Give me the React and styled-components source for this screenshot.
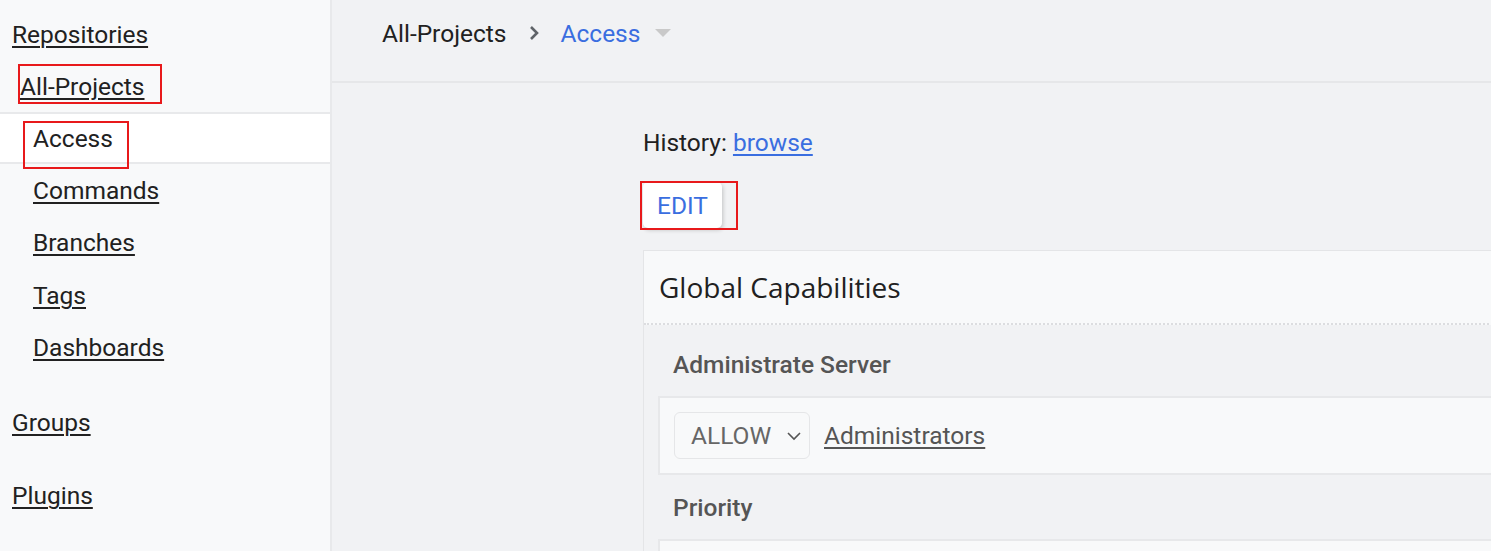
import React from 'react'
import styled, { createGlobalStyle } from 'styled-components'

const Global = createGlobalStyle`
  html, body {
    margin: 0;
    padding: 0;
    overflow: hidden;
    background: #f1f2f4;
    font-family: Roboto, "Liberation Sans", sans-serif;
    color: #212121;
  }
`

const sidebarItems = ['Access', 'Commands', 'Branches', 'Tags', 'Dashboards']

function App() {
  return (
    <Page>
      <Global />
      <Sidebar>
        <TopLink href='#'>Repositories</TopLink>
        <ProjectLink href='#'>
          <Mark $t={-8} $l={-2} $r={-17} $b={-3}>All-Projects</Mark>
        </ProjectLink>
        <SubList>
          {sidebarItems.map((item) => (
            <SubItem key={item} $active={item === 'Access'}>
              <a href='#'>
                {item === 'Access' ? (
                  <Mark $t={-3} $l={-10} $r={-16} $b={-16}>{item}</Mark>
                ) : (
                  item
                )}
              </a>
            </SubItem>
          ))}
        </SubList>
        <SectionLink href='#' $gap={23}>Groups</SectionLink>
        <SectionLink href='#' $gap={21}>Plugins</SectionLink>
      </Sidebar>

      <Main>
        <Header>
          <Crumb>All-Projects</Crumb>
          <Chevron viewBox='0 0 12 16'>
            <path d='M3 2 L9 8 L3 14' fill='none' stroke='#5f6368' strokeWidth='2.6' />
          </Chevron>
          <CrumbActive>Access</CrumbActive>
          <Caret />
        </Header>

        <Content>
          <History>
            History: <a href='#'>browse</a>
          </History>
          <EditMark $t={-1} $l={-3} $r={-16} $b={-2}>
            <EditButton>EDIT</EditButton>
          </EditMark>

          <Card>
            <CardHeader>Global Capabilities</CardHeader>
            <CardBody>
              <Permission>Administrate Server</Permission>
              <Rule>
                <Select>
                  ALLOW
                  <svg width='16' height='10' viewBox='0 0 16 10'>
                    <path d='M2 2 L8 8 L14 2' fill='none' stroke='#555' strokeWidth='1.6' />
                  </svg>
                </Select>
                <GroupLink href='#'>Administrators</GroupLink>
              </Rule>
              <Permission>Priority</Permission>
              <Rule />
            </CardBody>
          </Card>
        </Content>
      </Main>
    </Page>
  )
}

export default App

const Page = styled.div`
  display: flex;
  width: 1491px;
  height: 551px;
  overflow: hidden;
`

const Sidebar = styled.nav`
  width: 330px;
  flex-shrink: 0;
  background: #f8f9fa;
  border-right: 2px solid #e8e9eb;
  display: flex;
  flex-direction: column;
  padding-top: 8px;
  font-size: 24.5px;

  a {
    color: #212121;
    text-decoration: underline;
    text-underline-offset: 3px;
    text-decoration-thickness: 2px;
  }
`

const TopLink = styled.a`
  height: 52px;
  display: flex;
  align-items: center;
  padding-left: 12px;
`

const ProjectLink = styled(TopLink)`
  padding-left: 20px;
`

const SectionLink = styled(TopLink)`
  margin-top: ${(p) => p.$gap}px;
`

const SubList = styled.ul`
  list-style: none;
  margin: 0;
  padding: 0;
`

const SubItem = styled.li`
  height: 52.4px;
  box-sizing: border-box;
  display: flex;
  align-items: center;
  padding-left: 33px;
  background: ${(p) => (p.$active ? '#fff' : 'transparent')};
  border-top: 2px solid ${(p) => (p.$active ? '#e8e9eb' : 'transparent')};
  border-bottom: 2px solid ${(p) => (p.$active ? '#e8e9eb' : 'transparent')};
`

const Mark = styled.span`
  position: relative;
  display: inline-block;

  &::after {
    content: '';
    position: absolute;
    top: ${(p) => p.$t}px;
    left: ${(p) => p.$l}px;
    right: ${(p) => p.$r}px;
    bottom: ${(p) => p.$b}px;
    border: 2px solid #e8191b;
    pointer-events: none;
  }
`

const EditMark = styled(Mark)`
  margin-top: 25px;
`

const Main = styled.main`
  flex: 1;
  display: flex;
  flex-direction: column;
  min-width: 0;
`

const Header = styled.header`
  flex-shrink: 0;
  border-bottom: 2px solid #e6e7e9;
  display: flex;
  align-items: center;
  padding-left: 50px;
  padding-bottom: 15px;
  box-sizing: border-box;
  height: 83px;
  font-size: 24.5px;
`

const Crumb = styled.span`
  color: #212121;
`

const Chevron = styled.svg`
  width: 12px;
  height: 16px;
  margin: 0 21px 0 21px;
`

const CrumbActive = styled.span`
  color: #3a6ee0;
`

const Caret = styled.span`
  width: 0;
  height: 0;
  margin-left: 15px;
  border-left: 8px solid transparent;
  border-right: 8px solid transparent;
  border-top: 8px solid #c9c9c9;
`

const Content = styled.div`
  padding: 45px 0 0 311px;
  display: flex;
  flex-direction: column;
  align-items: flex-start;
`

const History = styled.div`
  font-size: 24.5px;
  line-height: 29px;
  color: #212121;

  a {
    color: #3a6ee0;
    text-underline-offset: 3px;
  }
`

const EditButton = styled.button`
  display: block;
  font-family: Roboto, "Liberation Sans", sans-serif;
  font-size: 24.5px;
  color: #3a6ee0;
  background: #fff;
  border: none;
  border-radius: 5px;
  padding: 0 14px;
  height: 46px;
  box-shadow: 1px 2px 4px rgba(0, 0, 0, 0.2);
`

const Card = styled.section`
  margin-top: 22px;
  width: 1200px;
  border: 1px solid #e4e5e7;
  border-right: none;
`

const CardHeader = styled.h3`
  margin: 0;
  height: 72px;
  display: flex;
  align-items: center;
  padding-left: 15px;
  background: #f8f9fa;
  border-bottom: 2px dotted #dcdde0;
  font-family: "Open Sans", sans-serif;
  font-weight: 400;
  font-size: 28px;
  color: #212121;
`

const CardBody = styled.div`
  padding: 7px 0 0 14px;
`

const Permission = styled.h4`
  margin: 0;
  height: 64px;
  display: flex;
  align-items: center;
  padding-left: 15px;
  font-size: 24.5px;
  font-weight: 500;
  color: #555;
`

const Rule = styled.div`
  height: 79px;
  box-sizing: border-box;
  border: 2px solid #e7e8ea;
  border-right: none;
  background: #f8f9fa;
  display: flex;
  align-items: center;
  padding-left: 14px;
  gap: 14px;
`

const Select = styled.div`
  width: 136px;
  height: 47px;
  box-sizing: border-box;
  border: 1px solid #e5e6e8;
  border-radius: 6px;
  background: #f8f9fa;
  display: flex;
  align-items: center;
  justify-content: space-between;
  padding: 0 7px 0 16px;
  font-size: 24.5px;
  color: #666;
`

const GroupLink = styled.a`
  font-size: 24.5px;
  color: #555;
  text-underline-offset: 3px;
`
